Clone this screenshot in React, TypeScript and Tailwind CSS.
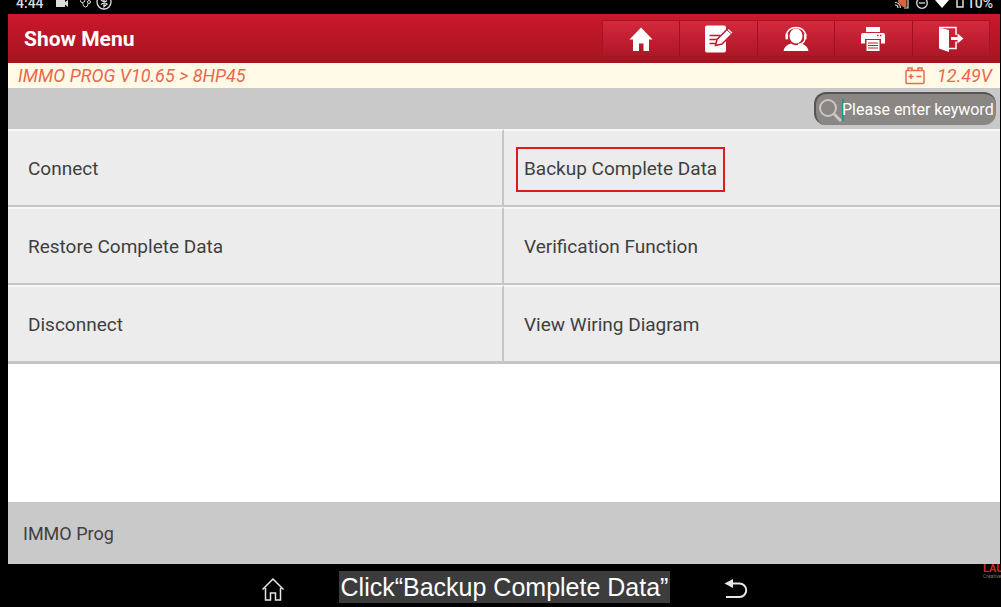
import { useState } from 'react';
import type { ReactNode } from 'react';

const MENU_ITEMS = [
  { id: 'connect', label: 'Connect' },
  { id: 'backup', label: 'Backup Complete Data', highlighted: true },
  { id: 'restore', label: 'Restore Complete Data' },
  { id: 'verify', label: 'Verification Function' },
  { id: 'disconnect', label: 'Disconnect' },
  { id: 'wiring', label: 'View Wiring Diagram' },
];

const TOOLBAR: { label: string; icon: ReactNode }[] = [
  {
    label: 'Home',
    icon: (
      <svg viewBox="0 0 24 24" className="size-6" fill="currentColor">
        <path d="M12 0.5 23.5 12.5 H20 V24 H14.5 V16.5 H10 V24 H4 V12.5 H0.5Z" />
      </svg>
    ),
  },
  {
    label: 'Notes',
    icon: (
      <svg viewBox="0 0 28 28" className="size-7" fill="currentColor">
        <path d="M2 0.5h17a2 2 0 0 1 2 2v23a2 2 0 0 1-2 2H2a2 2 0 0 1-2-2v-23a2 2 0 0 1 2-2Z" />
        <path d="M4.5 10.5H15M4.5 14.5H12M4.5 18.5H16" fill="none" stroke="#c21c31" strokeWidth="1.5" />
        <path d="m10.5 20.5 1.5-6L23.5 3l5 4.5L17 19Z" stroke="#c21c31" strokeWidth="1.5" />
        <path d="m21.5 4.5 5 4.5" stroke="#c21c31" />
      </svg>
    ),
  },
  {
    label: 'Support',
    icon: (
      <svg viewBox="0 0 26 26" className="size-[26px]" fill="currentColor">
        <ellipse cx="13" cy="10" rx="6.500" ry="7.500" />
        <path d="M3.5 10C3.5-1.5 22.5-1.5 22.5 10" fill="none" stroke="currentColor" strokeWidth="1.5" />
        <rect x="2.5" y="7.5" width="2.5" height="6" rx="1" />
        <rect x="21" y="7.5" width="2.5" height="6" rx="1" />
        <path d="M22 13q-1 5-7 5.500" fill="none" stroke="currentColor" strokeWidth="1.3" />
        <path d="M0.500 25q.5-5.500 7.500-7.500 5 3.500 10 0 7 2 7.500 7.500Z" />
      </svg>
    ),
  },
  {
    label: 'Print',
    icon: (
      <svg viewBox="0 0 24 24" className="size-6" fill="currentColor">
        <path d="M5 0h14v5H5Z" />
        <path d="M2 6h20a2 2 0 0 1 2 2v8.500h-4V12H4v4.500H0V8a2 2 0 0 1 2-2Z" />
        <path d="M5.500 13h13v11h-13Z" />
        <path d="M7 16h10M7 18.500h10M7 21h10" stroke="#c21c31" strokeWidth="1" />
        <path d="M16 8.500h1.500M19 8.500h1.500" stroke="#c21c31" strokeWidth="1.500" />
      </svg>
    ),
  },
  {
    label: 'Exit',
    icon: (
      <svg viewBox="0 0 26 26" className="size-[26px]" fill="currentColor">
        <path d="M1 1.500 11 4v22L1 22.500Z" />
        <path d="M1 1.500h17V9M18 15.500v7h-7" fill="none" stroke="currentColor" strokeWidth="1.500" />
        <path d="M13 11h6.500V7.500l6 5-6 5V14H13Z" />
      </svg>
    ),
  },
];

function StatusBar() {
  return (
    <div className="flex h-[14px] shrink-0 items-end justify-between overflow-hidden pr-2 pl-4 text-[#dcdcdc]">
      <div className="flex items-end gap-3">
        <span className="text-sm leading-[22px] font-medium">4:44</span>
        <svg viewBox="0 0 12 14" className="h-[14px] w-3" fill="currentColor">
          <path d="M0 0h9v2l3-2v7L9 4.500V7H0Z" />
        </svg>
        <svg viewBox="0 0 12 14" className="h-[14px] w-3" fill="none" stroke="currentColor">
          <path d="M0 0q0 2.500 2.500 2.500T5 0M2.500 2.500Q3 7 5.500 7T8 3.500" />
          <circle cx="9" cy="2" r="1.500" />
        </svg>
        <svg viewBox="0 0 16 14" className="-ml-2 h-[14px] w-4" fill="none" stroke="currentColor" strokeWidth="1.300">
          <circle cx="8" cy="2" r="7" />
          <path d="m5 0 6 4-3 2.500V-3M5 4.500l6-4" />
        </svg>
      </div>
      <div className="flex items-end gap-[7px]">
        <svg viewBox="0 0 14 14" className="h-[14px] w-[14px]" fill="none" stroke="currentColor" strokeWidth="1.200">
          <path d="M3-1h8.500v8H8L3 2Z" fill="#d9643f" stroke="none" />
          <path d="M1-1v1M13-1v9H9M0 2.500q5 0 5.500 5.500M0 5q3 0 3 3" />
        </svg>
        <svg viewBox="0 0 12 14" className="h-[14px] w-3" fill="none" stroke="currentColor" strokeWidth="1.300">
          <circle cx="6" cy="3" r="5.300" />
          <path d="M3 3h6" />
        </svg>
        <svg viewBox="0 0 14 14" className="h-[14px] w-[14px]" fill="#fff">
          <path d="M0 0h14L7 8Z" />
        </svg>
        <svg viewBox="0 0 8 14" className="h-[14px] w-2" fill="none" stroke="currentColor" strokeWidth="1.500">
          <path d="M1-1v8h6v-8" />
        </svg>
        <span className="-ml-1 text-sm leading-[22px] font-medium">10%</span>
      </div>
    </div>
  );
}

export default function App() {
  const [keyword, setKeyword] = useState('');

  return (
    <div className="flex min-h-screen flex-col bg-black font-[Roboto,sans-serif]">
      <StatusBar />

      <div className="mr-px ml-2 flex grow flex-col bg-white">
        {/* Title bar */}
        <header className="flex h-[49px] items-center justify-between bg-linear-to-b from-[#cb182c] to-[#a5141f] pr-[10px] pl-4">
          <h1 className="pt-[2px] text-[21px] font-bold text-white">Show Menu</h1>
          <nav className="flex h-[37px] w-[388px] border border-[#a51424]">
            {TOOLBAR.map((tool) => (
              <button
                key={tool.label}
                type="button"
                aria-label={tool.label}
                className="flex flex-1 items-center justify-center border-r border-[#9c1222] bg-linear-to-b from-[#d5283d] to-[#ae1726] text-white last:border-r-0"
              >
                {tool.icon}
              </button>
            ))}
          </nav>
        </header>

        {/* Path and battery voltage */}
        <div className="flex h-[25px] items-center justify-between bg-[#fff9e6] pr-2 pl-[10px] text-lg text-[#e8694c] italic">
          <span>IMMO PROG V10.65 &gt; 8HP45</span>
          <span className="flex items-center gap-3">
            <svg viewBox="0 0 20 18" className="h-[18px] w-5" fill="none" stroke="currentColor" strokeWidth="1.500">
              <rect x="1" y="3.500" width="18" height="13" rx="1" />
              <path d="M3 3V1h4v2M13 3V1h4v2M3.500 9.500h5M6 7v5M11.500 9.500h5" />
            </svg>
            12.49V
          </span>
        </div>

        {/* Search */}
        <div className="flex h-[41px] items-center justify-end bg-[#c9c9c9] pr-1">
          <label className="flex h-[33px] w-[182px] items-center rounded-xl border-t-2 border-l-2 border-[#555] bg-[#8a8683] pl-[2px]">
            <svg viewBox="0 0 24 24" className="size-6 shrink-0" fill="none" stroke="#c9c7c5" strokeWidth="2">
              <circle cx="10" cy="10" r="8" />
              <path d="m16 16 7 7" strokeWidth="3" />
            </svg>
            <span className="h-[22px] w-[2px] shrink-0 bg-[#159a8c]" />
            <input
              type="text"
              aria-label="Keyword"
              placeholder="Please enter keyword"
              value={keyword}
              onChange={(e) => setKeyword(e.target.value)}
              className="-ml-[2px] w-0 grow text-base text-white outline-none placeholder:text-white"
            />
          </label>
        </div>

        {/* Function list */}
        <main className="grid grid-cols-2 border-b border-[#c6c6c6]">
          {MENU_ITEMS.map((item) => (
            <button
              key={item.id}
              type="button"
              className="flex h-[78px] items-center border-t-2 border-r-2 border-b-2 border-t-[#f7f7f7] border-r-[#c6c6c6] border-b-[#c6c6c6] bg-[#ececec] pt-[3px] pl-3 text-left text-[19px] text-[#3f3f3f] even:border-r-0"
            >
              <span
                className={
                  item.highlighted
                    ? 'border-2 border-[#e01b1b] px-[6px] py-[6px]'
                    : 'px-2'
                }
              >
                {item.label}
              </span>
            </button>
          ))}
        </main>

        <footer className="mt-auto flex h-[62px] items-center bg-[#c9c9c9] pt-[2px] pl-[15px] text-lg text-[#3f3f3f]">
          IMMO Prog
        </footer>
      </div>

      {/* System navigation and caption */}
      <div className="relative flex h-[43px] shrink-0 items-center justify-center gap-[54px] pt-[2px] pl-2 text-[#e6e6e6]">
        <button type="button" aria-label="Home screen" className="mt-1">
          <svg viewBox="0 0 24 24" className="size-6" fill="none" stroke="currentColor" strokeWidth="1.500">
            <path d="M1.500 12.500 12 2l10.500 10.500M4.500 11v12h5v-7h5v7h5V11" />
          </svg>
        </button>
        <p className="bg-[#3c3c3c] px-[2px] font-['Liberation_Sans',sans-serif] text-[25px] leading-8 whitespace-nowrap text-white">
          Click“Backup Complete Data”
        </p>
        <button type="button" aria-label="Back" className="mt-1">
          <svg viewBox="0 0 24 24" className="size-6" fill="none" stroke="currentColor" strokeWidth="2">
            <path d="M7 6.500h8.500a6.500 6.500 0 0 1 0 13.500H2" />
            <path d="M0.500 6.500 9 2v9Z" fill="currentColor" stroke="none" />
          </svg>
        </button>
        <div className="absolute top-0 right-0 w-[18px] overflow-hidden whitespace-nowrap">
          <div className="text-[11px] leading-[10px] font-bold text-[#c92a1e]">LAUNCH</div>
          <div className="text-[5px] leading-[5px] text-[#777]">Creative</div>
        </div>
      </div>
    </div>
  );
}
